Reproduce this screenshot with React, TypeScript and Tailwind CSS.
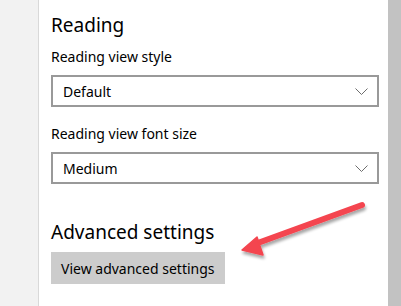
import React from "react";

const Chevron = () => (
  <svg width="13" height="7" viewBox="0 0 13 7" className="shrink-0">
    <path d="M0.5 0.5 L6.5 6.5 L12.5 0.5" fill="none" stroke="#6d6d6d" strokeWidth="1" />
  </svg>
);

const Dropdown = ({ value }: { value: string }) => (
  <div className="w-[328px] h-[32px] border-2 border-[#999999] bg-white flex items-center justify-between pl-[10px] pr-[9px] text-[14px] text-black">
    <span>{value}</span>
    <Chevron />
  </div>
);

export default function App() {
  return (
    <div
      className="w-[401px] h-[306px] flex bg-white overflow-hidden relative"
      style={{ fontFamily: '"Noto Sans", "Open Sans", sans-serif' }}
    >
      <div className="w-[39px] h-full bg-[#f2f2f2] border-r border-[#d9d9d9]" />
      <div className="flex-1 flex flex-col pl-[12px] pt-[11px] text-black">
        <div className="text-[19px] leading-[28px]">Reading</div>
        <div className="text-[14px] leading-[20px] mt-[8px]">Reading view style</div>
        <div className="mt-[8px]">
          <Dropdown value="Default" />
        </div>
        <div className="text-[14px] leading-[20px] mt-[17px]">Reading view font size</div>
        <div className="mt-[8px]">
          <Dropdown value="Medium" />
        </div>
        <div className="text-[19px] leading-[28px] mt-[34px]">Advanced settings</div>
        <div className="mt-[6px]">
          <div className="inline-flex items-center h-[32px] px-[10px] bg-[#cccccc] text-[14px]">
            View advanced settings
          </div>
        </div>
      </div>
      <div className="w-[13px] h-full bg-[#c2c2c2]" />
      <svg className="absolute left-0 top-0 pointer-events-none" width="401" height="306" viewBox="0 0 401 306">
        <defs>
          <filter id="sh" x="-20%" y="-20%" width="140%" height="140%">
            <feGaussianBlur in="SourceAlpha" stdDeviation="1.5" />
            <feOffset dx="1" dy="3" result="b" />
            <feComponentTransfer>
              <feFuncA type="linear" slope="0.35" />
            </feComponentTransfer>
            <feMerge>
              <feMergeNode />
              <feMergeNode in="SourceGraphic" />
            </feMerge>
          </filter>
        </defs>
        <g filter="url(#sh)" fill="#f4454f" stroke="#f4454f">
          <line x1="362" y1="205" x2="255" y2="244" strokeWidth="6" strokeLinecap="round" />
          <polygon points="242,250 257,237 263,255" strokeWidth="1.5" strokeLinejoin="round" />
        </g>
      </svg>
    </div>
  );
}
